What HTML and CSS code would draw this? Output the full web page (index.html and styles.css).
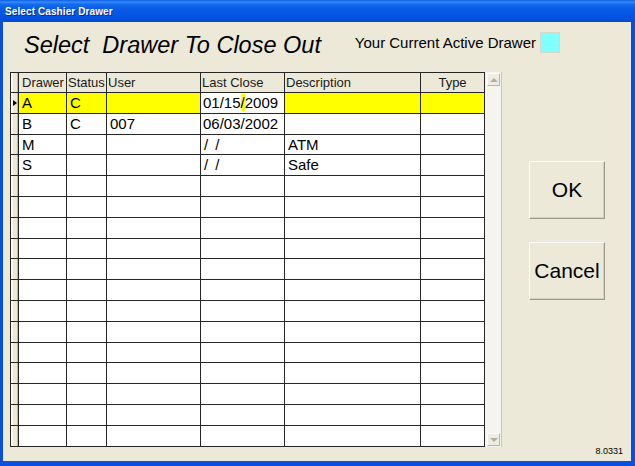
FILE: index.html
```html
<!DOCTYPE html>
<html>
<head>
<meta charset="utf-8">
<link rel="stylesheet" href="styles.css">
</head>
<body>
<div class="window">
  <div class="titlebar"><span class="title">Select Cashier Drawer</span></div>
  <div class="client">
    <div class="top">
      <h1 class="heading">Select  Drawer To Close Out</h1>
      <div class="active">
        <span class="active-label">Your Current Active Drawer</span>
        <span class="active-box"></span>
      </div>
    </div>
    <div class="main">
      <div class="grid">
        <div class="grid-body">
          <div class="row head">
            <div class="cell ind"></div>
            <div class="cell first">Drawer</div>
            <div class="cell">Status</div>
            <div class="cell">User</div>
            <div class="cell">Last Close</div>
            <div class="cell">Description</div>
            <div class="cell center">Type</div>
          </div>
          <div class="row data current">
            <div class="cell ind"><span class="pointer"></span></div>
            <div class="cell first">A</div>
            <div class="cell">C</div>
            <div class="cell"></div>
            <div class="cell date edit">01/15<span class="hl">/</span>2009</div>
            <div class="cell"></div>
            <div class="cell"></div>
          </div>
          <div class="row data">
            <div class="cell ind"></div>
            <div class="cell first">B</div>
            <div class="cell">C</div>
            <div class="cell">007</div>
            <div class="cell date">06/03/2002</div>
            <div class="cell"></div>
            <div class="cell"></div>
          </div>
          <div class="row data">
            <div class="cell ind"></div>
            <div class="cell first">M</div>
            <div class="cell"></div>
            <div class="cell"></div>
            <div class="cell date mask">/ /</div>
            <div class="cell">ATM</div>
            <div class="cell"></div>
          </div>
          <div class="row data">
            <div class="cell ind"></div>
            <div class="cell first">S</div>
            <div class="cell"></div>
            <div class="cell"></div>
            <div class="cell date mask">/ /</div>
            <div class="cell">Safe</div>
            <div class="cell"></div>
          </div>
          <div class="row data"><div class="cell ind"></div><div class="cell"></div><div class="cell"></div><div class="cell"></div><div class="cell"></div><div class="cell"></div><div class="cell"></div></div>
          <div class="row data"><div class="cell ind"></div><div class="cell"></div><div class="cell"></div><div class="cell"></div><div class="cell"></div><div class="cell"></div><div class="cell"></div></div>
          <div class="row data"><div class="cell ind"></div><div class="cell"></div><div class="cell"></div><div class="cell"></div><div class="cell"></div><div class="cell"></div><div class="cell"></div></div>
          <div class="row data"><div class="cell ind"></div><div class="cell"></div><div class="cell"></div><div class="cell"></div><div class="cell"></div><div class="cell"></div><div class="cell"></div></div>
          <div class="row data"><div class="cell ind"></div><div class="cell"></div><div class="cell"></div><div class="cell"></div><div class="cell"></div><div class="cell"></div><div class="cell"></div></div>
          <div class="row data"><div class="cell ind"></div><div class="cell"></div><div class="cell"></div><div class="cell"></div><div class="cell"></div><div class="cell"></div><div class="cell"></div></div>
          <div class="row data"><div class="cell ind"></div><div class="cell"></div><div class="cell"></div><div class="cell"></div><div class="cell"></div><div class="cell"></div><div class="cell"></div></div>
          <div class="row data"><div class="cell ind"></div><div class="cell"></div><div class="cell"></div><div class="cell"></div><div class="cell"></div><div class="cell"></div><div class="cell"></div></div>
          <div class="row data"><div class="cell ind"></div><div class="cell"></div><div class="cell"></div><div class="cell"></div><div class="cell"></div><div class="cell"></div><div class="cell"></div></div>
          <div class="row data"><div class="cell ind"></div><div class="cell"></div><div class="cell"></div><div class="cell"></div><div class="cell"></div><div class="cell"></div><div class="cell"></div></div>
          <div class="row data"><div class="cell ind"></div><div class="cell"></div><div class="cell"></div><div class="cell"></div><div class="cell"></div><div class="cell"></div><div class="cell"></div></div>
          <div class="row data"><div class="cell ind"></div><div class="cell"></div><div class="cell"></div><div class="cell"></div><div class="cell"></div><div class="cell"></div><div class="cell"></div></div>
          <div class="row data"><div class="cell ind"></div><div class="cell"></div><div class="cell"></div><div class="cell"></div><div class="cell"></div><div class="cell"></div><div class="cell"></div></div>
        </div>
        <div class="vscroll">
          <div class="sb-btn"><span class="arrow up"></span></div>
          <div class="sb-track"></div>
          <div class="sb-btn"><span class="arrow down"></span></div>
        </div>
      </div>
      <div class="buttons">
        <button class="btn">OK</button>
        <button class="btn">Cancel</button>
      </div>
    </div>
    <div class="footer">8.0331</div>
  </div>
</div>
</body>
</html>
```

FILE: styles.css
```css
html, body {
  margin: 0;
  padding: 0;
  background: #0a55e0;
}

.window {
  width: 635px;
  height: 466px;
  box-sizing: border-box;
  background: linear-gradient(90deg, #0840cf 0, #0b5ae8 2px, #0a55e0 100%);
  border-left: 3px solid #0850dc;
  border-right: 4px solid #0850dc;
  border-bottom: 5px solid #0a4fe0;
  display: flex;
  flex-direction: column;
  font-family: "Liberation Sans", Arial, sans-serif;
}

.titlebar {
  height: 22px;
  margin-left: -3px;
  margin-right: -4px;
  padding-left: 5px;
  background: linear-gradient(180deg, #0a5be6 0, #3a8cf6 2px, #166ced 4px, #0a5de7 8px, #0657e4 14px, #0550dc 19px, #0447cf 22px);
  display: flex;
  align-items: center;
}

.title {
  color: #ffffff;
  font-family: "Liberation Sans", Arial, sans-serif;
  font-weight: bold;
  font-size: 10px;
  letter-spacing: 0.1px;
  text-shadow: 1px 1px 0 #0a2a9a;
  padding-top: 1px;
}

.client {
  flex: 1;
  background: #ece9d8;
  display: flex;
  flex-direction: column;
}

.top {
  height: 50px;
  display: flex;
  justify-content: space-between;
  align-items: flex-start;
  padding-left: 21px;
  padding-right: 71px;
}

.heading {
  margin: 10px 0 0 0;
  font-family: "Liberation Sans", Arial, sans-serif;
  font-style: italic;
  font-weight: normal;
  font-size: 23.5px;
  line-height: 27px;
  color: #000;
  white-space: pre;
}

.active {
  display: flex;
  align-items: flex-start;
  gap: 4px;
}

.active-label {
  margin-top: 12px;
  font-size: 15px;
  line-height: 18px;
  color: #000;
  white-space: nowrap;
}

.active-box {
  margin-top: 10px;
  width: 20px;
  height: 21px;
  box-sizing: border-box;
  background: #80ffff;
  border: 1px solid #d9d7cb;
}

.main {
  display: flex;
  padding-left: 7px;
}

.grid {
  display: flex;
  height: 375px;
}

.grid-body {
  width: 475px;
  box-sizing: border-box;
  border-top: 1px solid #262626;
  border-left: 1px solid #262626;
  background: #ffffff;
}

.row {
  display: grid;
  grid-template-columns: 8px 48px 40px 94px 84px 136px 64px;
}

.row.head {
  height: 20px;
  background: #ece9d8;
  font-size: 13px;
  line-height: 19px;
}

.row.data {
  height: 20.8px;
  font-size: 15px;
  line-height: 20px;
}

.cell {
  box-sizing: border-box;
  border-right: 1px solid #262626;
  border-bottom: 1px solid #262626;
  padding-left: 3px;
  color: #000;
  white-space: pre;
  overflow: hidden;
}

.row.head .cell {
  padding-left: 1px;
  color: #1a1a1a;
}

.row.head .cell.first {
  padding-left: 3px;
}

.row.head .cell.center {
  text-align: center;
  padding-left: 0;
}

.cell.date {
  padding-left: 2px;
}

.cell.mask {
  padding-left: 3px;
  word-spacing: 3px;
}

.cell.ind {
  padding: 0;
  background: #ece9d8;
  box-shadow: inset 1px 0 0 #ffffff, inset 2px 0 0 #f6f5ef, inset -1px 0 0 #b9b6a6;
  position: relative;
}

.row.current .cell {
  background: #ffff00;
}

.row.current .cell.ind {
  background: #ece9d8;
}

.row.current .cell.edit {
  background: #ffffff;
}

.hl {
  background: #ffff00;
}

.pointer {
  position: absolute;
  left: 2px;
  top: 7px;
  width: 0;
  height: 0;
  border-left: 4px solid #000;
  border-top: 3px solid transparent;
  border-bottom: 3px solid transparent;
}

.vscroll {
  width: 17px;
  box-sizing: border-box;
  background: #f5f4ef;
  border-right: 1px solid #c9c6b8;
  padding: 1px 1px 1px 2px;
  display: flex;
  flex-direction: column;
}

.sb-track {
  flex: 1;
}

.sb-btn {
  height: 13px;
  box-sizing: border-box;
  background: #eeece3;
  border: 1px solid;
  border-color: #ffffff #b7b4a5 #b7b4a5 #ffffff;
  display: flex;
  align-items: center;
  justify-content: center;
}

.arrow {
  width: 0;
  height: 0;
  border-left: 4px solid transparent;
  border-right: 4px solid transparent;
}

.arrow.up {
  border-bottom: 4px solid #b3b0a1;
}

.arrow.down {
  border-top: 4px solid #b3b0a1;
}

.buttons {
  margin-left: 27px;
  padding-top: 89px;
  display: flex;
  flex-direction: column;
  gap: 23px;
}

.btn {
  width: 76px;
  height: 58px;
  margin: 0;
  padding: 0;
  box-sizing: border-box;
  background: #ece9d8;
  border: 1px solid;
  border-color: #ffffff #9d9a8c #9d9a8c #ffffff;
  box-shadow: inset -1px -1px 0 #d3d0c1;
  font-family: "Liberation Sans", Arial, sans-serif;
  font-size: 21px;
  color: #000;
}

.footer {
  margin-top: -1px;
  padding-right: 8px;
  text-align: right;
  font-size: 9px;
  line-height: 10px;
  color: #000;
}
```
